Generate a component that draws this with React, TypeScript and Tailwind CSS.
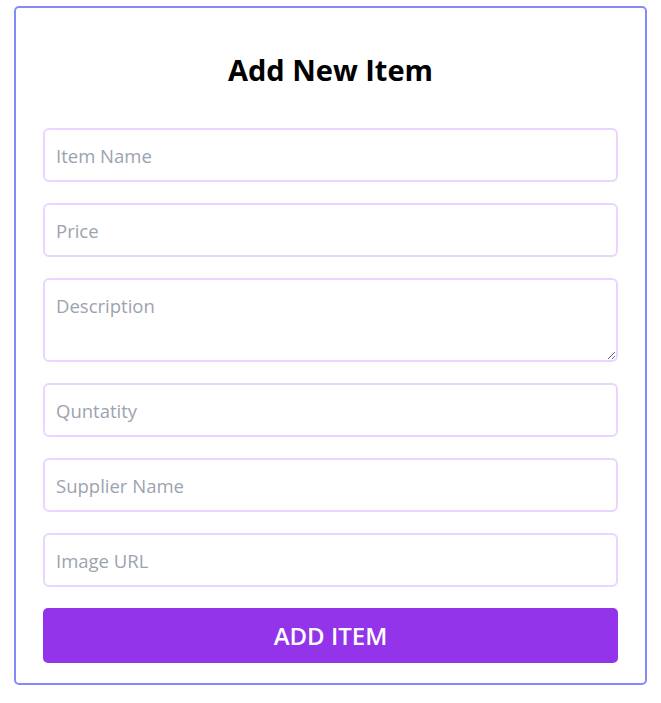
export default function App() {
  const font = { fontFamily: '"Open Sans", "Noto Sans", sans-serif' };
  return (
    <div className="bg-white min-h-[703px] pt-[6px]" style={font}>
      <form className="mx-auto w-[633px] border-2 border-[#818cf8] rounded-[5px] px-[27px] pt-px pb-5">
        <h2 className="text-center text-[29px] leading-9 font-bold text-black mt-[43px] mb-[40px]">
          Add New Item
        </h2>
        <Field placeholder="Item Name" />
        <Field placeholder="Price" />
        <textarea
          placeholder="Description"
          className="block w-full h-[84px] mb-[21px] border-2 border-[#e9d5ff] rounded-md px-[11px] pt-[12px] text-[18.5px] outline-none placeholder:text-[#9ca3af]"
        />
        <Field placeholder="Quntatity" />
        <Field placeholder="Supplier Name" />
        <Field placeholder="Image URL" />
        <button
          type="button"
          className="block w-full h-[55px] bg-[#9333ea] text-white text-2xl font-semibold rounded-[5px]"
        >
          ADD ITEM
        </button>
      </form>
    </div>
  );
}

function Field({ placeholder }: { placeholder: string }) {
  return (
    <input
      type="text"
      placeholder={placeholder}
      className="block w-full h-[54px] mb-[21px] border-2 border-[#e9d5ff] rounded-md px-[11px] text-[18.5px] outline-none placeholder:text-[#9ca3af]"
    />
  );
}
